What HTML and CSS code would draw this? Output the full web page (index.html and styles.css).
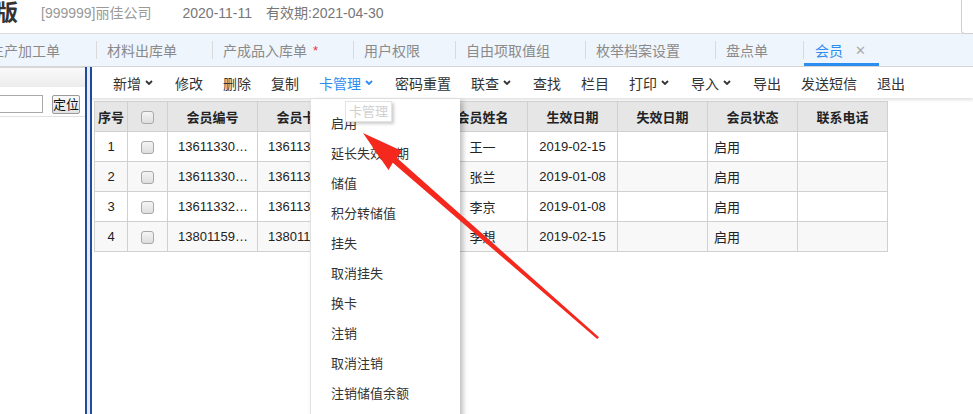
FILE: index.html
```html
<!DOCTYPE html>
<html lang="zh-CN">
<head>
  <meta charset="UTF-8" />
  <title>会员</title>
  <link rel="stylesheet" href="styles.css">
</head>
<body>
<div class="app">

  <header class="topbar">
    <span class="edition">版</span>
    <span class="company">[999999]丽佳公司</span>
    <span class="date">2020-11-11</span>
    <span class="expire">有效期:2021-04-30</span>
    <span class="corner"></span>
  </header>

  <nav class="tabs">
    <div class="tab first">生产加工单</div>
    <span class="sep"></span>
    <div class="tab">材料出库单</div>
    <span class="sep"></span>
    <div class="tab">产成品入库单<span class="dirty">*</span></div>
    <span class="sep"></span>
    <div class="tab">用户权限</div>
    <span class="sep"></span>
    <div class="tab">自由项取值组</div>
    <span class="sep"></span>
    <div class="tab">枚举档案设置</div>
    <span class="sep"></span>
    <div class="tab">盘点单</div>
    <span class="sep"></span>
    <div class="tab active">会员<span class="close">&#x2715;</span></div>
  </nav>

  <div class="main">
    <aside class="side">
      <div class="side-head"></div>
      <div class="side-search">
        <input class="side-input" type="text">
        <button class="btn-locate">定位</button>
      </div>
    </aside>

    <div class="splitter"></div>

    <section class="content">
      <div class="toolbar">
        <span class="tool">新增<svg class="chev" viewBox="0 0 8 5"><polyline points="1,1 4,4 7,1"/></svg></span>
        <span class="tool">修改</span>
        <span class="tool">删除</span>
        <span class="tool">复制</span>
        <span class="tool open">卡管理<svg class="chev" viewBox="0 0 8 5"><polyline points="1,1 4,4 7,1"/></svg></span>
        <span class="tool">密码重置</span>
        <span class="tool">联查<svg class="chev" viewBox="0 0 8 5"><polyline points="1,1 4,4 7,1"/></svg></span>
        <span class="tool">查找</span>
        <span class="tool">栏目</span>
        <span class="tool">打印<svg class="chev" viewBox="0 0 8 5"><polyline points="1,1 4,4 7,1"/></svg></span>
        <span class="tool">导入<svg class="chev" viewBox="0 0 8 5"><polyline points="1,1 4,4 7,1"/></svg></span>
        <span class="tool">导出</span>
        <span class="tool">发送短信</span>
        <span class="tool">退出</span>
      </div>

      <table class="grid">
        <colgroup>
          <col class="c-no"><col class="c-cb">
          <col class="c-w"><col class="c-w"><col class="c-w"><col class="c-w">
          <col class="c-w"><col class="c-w"><col class="c-w"><col class="c-w">
        </colgroup>
        <thead>
          <tr>
            <th>序号</th><th><span class="cb"></span></th>
            <th>会员编号</th><th>会员卡号</th><th>卡类型</th><th>会员姓名</th>
            <th>生效日期</th><th>失效日期</th><th>会员状态</th><th>联系电话</th>
          </tr>
        </thead>
        <tbody>
          <tr>
            <td>1</td><td><span class="cb"></span></td>
            <td class="ellip">13611330125</td><td class="ellip">13611330125</td><td>普通卡</td><td>王一</td>
            <td>2019-02-15</td><td></td><td class="left">启用</td><td></td>
          </tr>
          <tr class="alt">
            <td>2</td><td><span class="cb"></span></td>
            <td class="ellip">13611330562</td><td class="ellip">13611330562</td><td>普通卡</td><td>张兰</td>
            <td>2019-01-08</td><td></td><td class="left">启用</td><td></td>
          </tr>
          <tr>
            <td>3</td><td><span class="cb"></span></td>
            <td class="ellip">13611332874</td><td class="ellip">13611332874</td><td>普通卡</td><td>李京</td>
            <td>2019-01-08</td><td></td><td class="left">启用</td><td></td>
          </tr>
          <tr class="alt">
            <td>4</td><td><span class="cb"></span></td>
            <td class="ellip">13801159630</td><td class="ellip">13801159630</td><td>普通卡</td><td>李想</td>
            <td>2019-02-15</td><td></td><td class="left">启用</td><td></td>
          </tr>
        </tbody>
      </table>

      <!-- 卡管理 下拉菜单 -->
      <ul class="menu">
        <li>启用</li>
        <li>延长失效日期</li>
        <li>储值</li>
        <li>积分转储值</li>
        <li>挂失</li>
        <li>取消挂失</li>
        <li>换卡</li>
        <li>注销</li>
        <li>取消注销</li>
        <li>注销储值余额</li>
      </ul>
      <div class="tip">卡管理</div>
    </section>
  </div>

  <svg class="arrow" viewBox="0 0 973 414">
    <polygon points="363,133 402,151 397,158 599,337.3 597.2,339 392.8,162.7 388.5,170"/>
  </svg>
</div>
</body>
</html>
```

FILE: styles.css
```css
* { box-sizing: border-box; }
body { margin: 0; background: #fff; font-family: "Liberation Sans", "Noto Sans CJK SC", sans-serif; color: #333; }
.app { position: relative; width: 973px; height: 414px; overflow: hidden; }

/* top header */
.topbar { display: flex; align-items: flex-start; height: 34px; border-bottom: 1px solid #dcdcdc; white-space: nowrap; }
.edition { margin-left: -4px; font-size: 22px; font-weight: bold; line-height: 26px; color: #333; }
.company { margin-left: 23px; font-size: 14px; line-height: 27px; color: #999; }
.date { margin-left: 31px; font-size: 14px; line-height: 27px; color: #777; }
.expire { margin-left: 14px; font-size: 14px; line-height: 27px; color: #777; }
.corner { margin-left: auto; width: 12px; height: 34px; border: 1px solid #cfcfcf; border-top: none; border-right: none; border-radius: 0 0 0 4px; }

/* tabs */
.tabs { display: flex; align-items: center; height: 33px; background: #eff5fd; border-bottom: 1px solid #d6d6d6; white-space: nowrap; }
.tab { display: flex; align-items: center; height: 32px; padding: 0 35px 0 10px; font-size: 14px; color: #8a8a8a; }
.tab.first { margin-left: -20px; padding-right: 36px; }
.sep { width: 1px; height: 18px; background: #dadada; }
.dirty { margin-left: 6px; color: #e33; font-size: 13px; }
.tab.active { padding: 3px 13px 0 11px; color: #2d8cf0; border-bottom: 3px solid #2d8cf0; }
.close { margin-left: 12px; font-size: 13px; color: #aaa; }

/* main area */
.main { display: flex; height: 347px; }
.side { width: 85px; overflow: hidden; }
.side-head { height: 20px; background: linear-gradient(#fafafa, #ececec); border-top: 1px solid #d8d8d8; }
.side-search { display: flex; align-items: flex-start; padding-top: 8px; height: 30px; border-bottom: 1px solid #e2e2e2; }
.side-input { margin-left: -8px; width: 51px; height: 18px; border: 1px solid #a9a9a9; padding: 0; }
.btn-locate { margin-left: 9px; width: 28px; height: 19px; padding: 0; border: 1px solid #9a9a9a; border-radius: 2px; background: linear-gradient(#fafafa, #e2e2e2); font-size: 13px; font-family: inherit; color: #111; line-height: 16px; }
.splitter { width: 7px; background: #e7ecf4; border-left: 2px solid #1f4c9e; border-right: 2px solid #1f4c9e; }

.content { position: relative; flex: 1; }
.toolbar { display: flex; align-items: center; gap: 20px; height: 31px; padding-left: 21px; background: #fff; box-shadow: 0 2px 3px rgba(0,0,0,0.12); font-size: 14px; color: #333; white-space: nowrap; }
.tool { display: flex; align-items: center; }
.tool.open { color: #2d8cf0; }
.chev { width: 8px; height: 5px; margin: 0 2px 0 4px; fill: none; stroke: currentColor; stroke-width: 1.8; }

/* grid */
.grid { margin: 3px 0 0 2px; border-collapse: collapse; table-layout: fixed; width: 793px; font-size: 13px; color: #222; }
.c-no { width: 33px; }
.c-cb { width: 40px; }
.c-w { width: 90px; }
.grid tr { height: 30px; }
.grid th, .grid td { border: 1px solid #d0d0d0; padding: 0; text-align: center; white-space: nowrap; overflow: hidden; }
.grid th { background: #e6e6e6; font-weight: bold; }
.grid .alt td { background: #f8f8f8; }
.grid td.ellip { padding: 0 8px 0 10px; text-overflow: ellipsis; }
.grid td.left { text-align: left; padding-left: 6px; }
.cb { display: inline-block; width: 13px; height: 13px; vertical-align: middle; border: 1px solid #a8a8a8; border-radius: 3px; background: linear-gradient(#f4f4f4, #dedede); }

/* dropdown */
.menu { position: absolute; left: 218px; top: 32px; width: 150px; height: 340px; margin: 0; padding: 10px 0 0; list-style: none; background: #fff; border-left: 1px solid #e2e2e2; box-shadow: 3px 2px 5px rgba(0,0,0,0.25); font-size: 13px; color: #333; }
.menu li { height: 30px; line-height: 30px; padding-left: 20px; }
.tip { position: absolute; left: 253px; top: 34px; width: 47px; height: 21px; border: 1px solid #e4e4e4; background: #fff; box-shadow: 2px 2px 3px rgba(0,0,0,0.2); font-size: 13px; line-height: 19px; text-align: center; color: #d0d0d0; }

.arrow { position: absolute; left: 0; top: 0; width: 973px; height: 414px; pointer-events: none; fill: #f4281d; }
```
